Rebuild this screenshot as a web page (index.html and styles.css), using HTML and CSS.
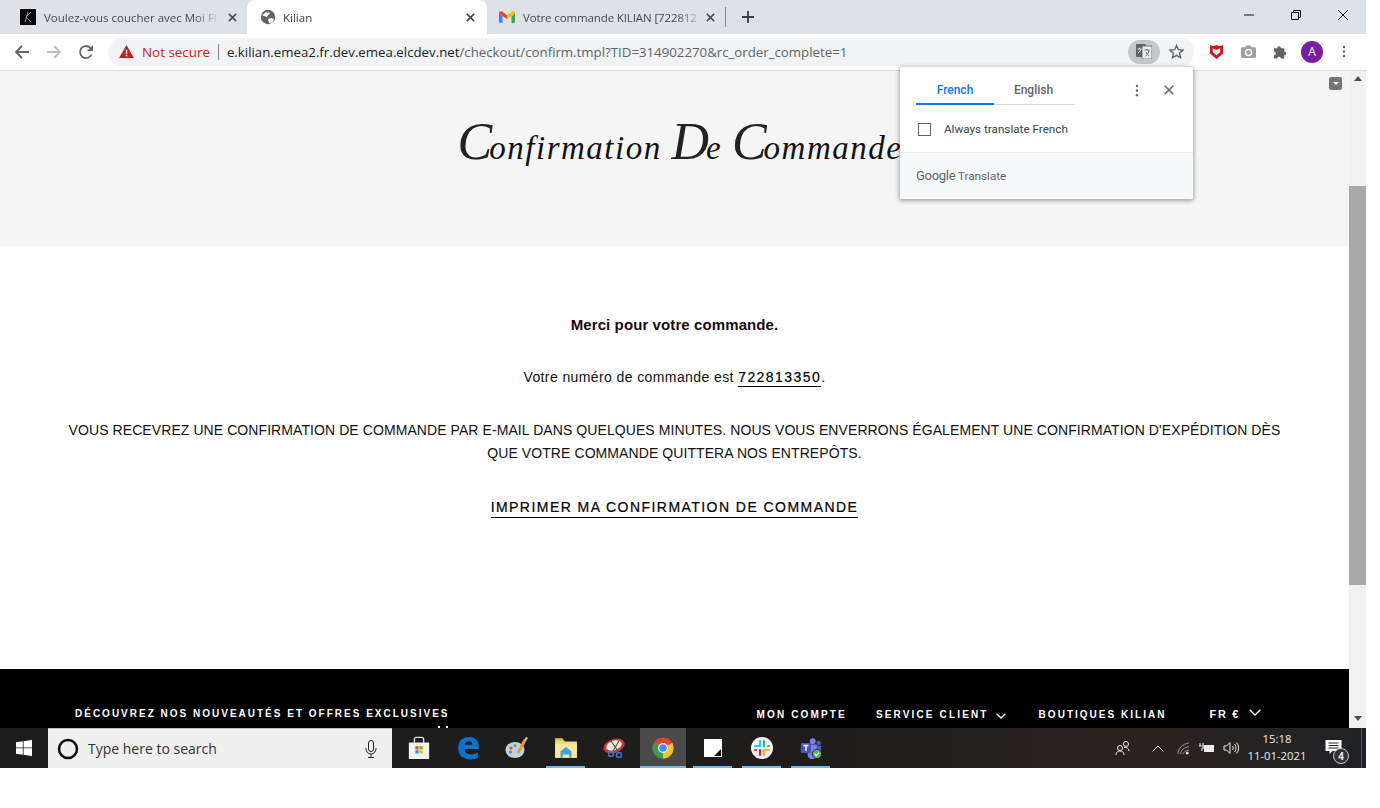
FILE: index.html
```html
<!DOCTYPE html>
<html lang="fr">
<head>
<meta charset="utf-8">
<title>Kilian</title>
<link rel="stylesheet" href="styles.css">
</head>
<body>
<div class="screen">
  <header class="tabstrip">
    <div class="tab tab-a">
      <svg class="fav" viewBox="0 0 16 16"><rect width="16" height="16" fill="#0a0a0a"/><path d="M5 13 8 3M11 3 6 8l5 5" stroke="#bbb" stroke-width=".8" fill="none"/></svg>
      <span class="tab-title">Voulez-vous coucher avec Moi Fl</span>
      <svg class="tab-x" viewBox="0 0 10 10"><path d="M1 1l8 8M9 1 1 9" stroke="#45484c" stroke-width="1.7"/></svg>
    </div>
    <div class="tab tab-active">
      <svg class="fav" viewBox="0 0 16 16"><circle cx="8" cy="8" r="7.2" fill="#5f6368"/><path d="M2 6c2-1 3-2 4-3 1 1 2 1 3 0l1 2-2 1-1 2-3-1zM8 10l3-1 3 1-2 4-3 0z" fill="#fff"/></svg>
      <span class="tab-title">Kilian</span>
      <svg class="tab-x" viewBox="0 0 10 10"><path d="M1 1l8 8M9 1 1 9" stroke="#45484c" stroke-width="1.7"/></svg>
    </div>
    <div class="tab tab-c">
      <svg class="fav" viewBox="0 0 16 12"><path d="M0 2v9a1 1 0 0 0 1 1h2.500V5.500z" fill="#4285f4"/><path d="M16 2v9a1 1 0 0 1-1 1h-2.500V5.500z" fill="#34a853"/><path d="M0 2C0 .5 1.500-.4 3 .6l5 3.700V8L0 2.500z" fill="#ea4335"/><path d="M16 2c0-1.500-1.500-2.400-3-1.400L8 4.300V8l8-5.500z" fill="#fbbc04"/></svg>
      <span class="tab-title">Votre commande KILIAN [722812</span>
      <svg class="tab-x" viewBox="0 0 10 10"><path d="M1 1l8 8M9 1 1 9" stroke="#45484c" stroke-width="1.7"/></svg>
    </div>
    <span class="tab-sep"></span>
    <svg class="new-tab" viewBox="0 0 12 12"><path d="M6 0v12M0 6h12" stroke="#3c4043" stroke-width="1.800"/></svg>
    <div class="win-controls">
      <svg class="win-btn" viewBox="0 0 12 12"><path d="M1 6h10" stroke="#111" stroke-width="1"/></svg>
      <svg class="win-btn" viewBox="0 0 12 12"><path d="M1.500 3.500h7v7h-7zM3.500 3.500v-2h7v7h-2" fill="none" stroke="#111" stroke-width="1"/></svg>
      <svg class="win-btn" viewBox="0 0 12 12"><path d="M1 1l10 10M11 1 1 11" stroke="#111" stroke-width="1"/></svg>
    </div>
  </header>

  <nav class="toolbar">
    <svg class="nav-ic" viewBox="0 0 16 16"><path d="M15 8H2M8 2 2 8l6 6" fill="none" stroke="#5f6368" stroke-width="1.800"/></svg>
    <svg class="nav-ic" viewBox="0 0 16 16"><path d="M1 8h13M8 2l6 6-6 6" fill="none" stroke="#bdc1c6" stroke-width="1.800"/></svg>
    <svg class="nav-ic" viewBox="0 0 16 16"><path d="M13.500 10.500A6 6 0 1 1 12.300 3.800" fill="none" stroke="#5f6368" stroke-width="1.800"/><path d="M15 1v6H9z" fill="#5f6368"/></svg>
    <div class="omnibox">
      <svg class="warn" viewBox="0 0 16 14"><path d="M8 0l8 14H0z" fill="#c5221f"/><path d="M7.200 5h1.600v4.500H7.200zM7.200 10.500h1.600V12H7.200z" fill="#fff"/></svg>
      <span class="not-secure">Not secure</span>
      <span class="omni-sep"></span>
      <span class="url"><b>e.kilian.emea2.fr.dev.emea.elcdev.net</b>/checkout/confirm.tmpl?TID=314902270&amp;rc_order_complete=1</span>
      <span class="translate-pill">
        <svg viewBox="0 0 16 15" class="translate-ic"><rect x="0" y="0" width="10" height="13" rx="1" fill="#5f6368"/><rect x="6" y="2" width="10" height="13" rx="1" fill="#e8eaed" stroke="#5f6368" stroke-width=".8"/><path d="M1.500 5h4M3.500 3.500V5M2 9c1.500-1 2.500-2.500 3-4" stroke="#e8eaed" fill="none"/><path d="M8.500 6h5M11 5v1M9.500 12c2-1 3-3 3.500-6M10 8c.6 1.800 2 3.300 3.500 4" stroke="#5f6368" fill="none" stroke-width=".9"/></svg>
      </span>
      <svg class="star" viewBox="0 0 16 16"><path d="M8 1.500l2 4.600 5 .4-3.800 3.300 1.200 4.900L8 12.100l-4.400 2.600 1.200-4.900L1 6.500l5-.4z" fill="none" stroke="#5f6368" stroke-width="1.400"/></svg>
    </div>
    <div class="ext-row">
      <svg class="ext" viewBox="0 0 14 16"><path d="M0 1l3.500 1.500L7 1l3.500 1.500L14 1v9l-7 6-7-6z" fill="#c8171d"/><path d="M3 4.500l4 1.800 4-1.800v4.300L7 12 3 8.800z" fill="#fff"/></svg>
      <svg class="ext" viewBox="0 0 16 14"><path d="M1.500 2.500h3L6 .5h4l1.500 2h3A1.500 1.500 0 0 1 16 4v8.500a1.500 1.500 0 0 1-1.500 1.500h-13A1.500 1.500 0 0 1 0 12.500V4a1.500 1.500 0 0 1 1.500-1.500z" fill="#9aa0a6"/><circle cx="8" cy="8" r="3.200" fill="none" stroke="#fff" stroke-width="1.500"/></svg>
      <svg class="ext" viewBox="0 0 16 16"><path d="M1 4.500h3.500a2 2 0 1 1 4 0H12v3.500a2 2 0 1 1 0 4V15.500H8.500a2 2 0 1 0-4 0H1v-3.500a2 2 0 1 0 0-4z" fill="#5f6368"/></svg>
      <span class="avatar">A</span>
      <svg class="ext kebab" viewBox="0 0 4 16"><circle cx="2" cy="2.500" r="1.500" fill="#5f6368"/><circle cx="2" cy="8" r="1.500" fill="#5f6368"/><circle cx="2" cy="13.500" r="1.500" fill="#5f6368"/></svg>
    </div>
  </nav>

  <div class="viewport">
    <main class="page">
      <section class="hero">
        <h1 class="hero-title"><span class="cap">C</span>onfirmation <span class="cap">D</span>e <span class="cap">C</span>ommande</h1>
      </section>
      <section class="confirm">
        <p class="thanks">Merci pour votre commande.</p>
        <p class="order">Votre numéro de commande est <a class="order-no">722813350</a>.</p>
        <p class="notice">VOUS RECEVREZ UNE CONFIRMATION DE COMMANDE PAR E-MAIL DANS QUELQUES MINUTES. NOUS VOUS ENVERRONS ÉGALEMENT UNE CONFIRMATION D'EXPÉDITION DÈS QUE VOTRE COMMANDE QUITTERA NOS ENTREPÔTS.</p>
        <a class="print">IMPRIMER MA CONFIRMATION DE COMMANDE</a>
      </section>
      <footer class="site-footer">
        <span class="news">DÉCOUVREZ NOS NOUVEAUTÉS ET OFFRES EXCLUSIVES</span>
        <div class="foot-links">
          <span class="foot-link l1">MON COMPTE</span>
          <span class="foot-link l2">SERVICE CLIENT <svg class="chev" viewBox="0 0 10 6"><path d="M.7.7 5 5 9.300.7" fill="none" stroke="#fff" stroke-width="1.300"/></svg></span>
          <span class="foot-link l3">BOUTIQUES KILIAN</span>
          <span class="foot-lang">FR € <svg class="chev big" viewBox="0 0 12 7"><path d="M.7.7 6 6 11.300.7" fill="none" stroke="#fff" stroke-width="1.300"/></svg></span>
        </div>
      </footer>
    </main>
    <aside class="scrollbar">
      <span class="arrow-up"></span>
      <span class="thumb"></span>
      <span class="arrow-down"></span>
    </aside>
  </div>

  <div class="translate-pop">
    <div class="pop-main">
      <div class="pop-head">
        <div class="pop-tabs">
          <span class="pop-tab on">French</span>
          <span class="pop-tab">English</span>
        </div>
        <svg class="pop-kebab" viewBox="0 0 4 14"><circle cx="2" cy="2" r="1.300" fill="#5f6368"/><circle cx="2" cy="7" r="1.300" fill="#5f6368"/><circle cx="2" cy="12" r="1.300" fill="#5f6368"/></svg>
        <svg class="pop-x" viewBox="0 0 10 10"><path d="M.7.7l8.600 8.600M9.300.7.7 9.300" stroke="#5f6368" stroke-width="1.500"/></svg>
      </div>
      <label class="pop-check"><span class="box"></span>Always translate French</label>
    </div>
    <div class="pop-foot"><span class="g-logo">Google</span> Translate</div>
  </div>

  <footer class="taskbar">
    <span class="start"><svg viewBox="0 0 16 16"><path d="M0 2.300 6.800 1.300v6.200H0zM7.600 1.200 16 0v7.500H7.600zM0 8.300h6.800v6.400L0 13.700zM7.600 8.300H16V16l-8.400-1.200z" fill="#fff"/></svg></span>
    <div class="search">
      <svg class="cortana" viewBox="0 0 22 22"><circle cx="11" cy="11" r="9" fill="none" stroke="#111" stroke-width="2.600"/></svg>
      <span class="search-text">Type here to search</span>
      <svg class="mic" viewBox="0 0 12 18"><rect x="3.500" y=".5" width="5" height="11" rx="2.500" fill="none" stroke="#222"/><path d="M1 8v1a5 5 0 0 0 10 0V8M6 14v3M3 17.500h6" fill="none" stroke="#222"/></svg>
    </div>
    <div class="apps">
      <span class="app"><svg viewBox="0 0 24 26"><path d="M7 7V3.500A2 2 0 0 1 9 1.500h6a2 2 0 0 1 2 2V7" fill="none" stroke="#ddd" stroke-width="1.500"/><path d="M1 7h22v17a1 1 0 0 1-1 1H2a1 1 0 0 1-1-1z" fill="#f3f3f3"/><path d="M8 11h3.600v3.600H8z" fill="#f25022"/><path d="M12.400 11H16v3.600h-3.600z" fill="#7fba00"/><path d="M8 15.400h3.600V19H8z" fill="#00a4ef"/><path d="M12.400 15.400H16V19h-3.600z" fill="#ffb900"/></svg></span>
      <span class="app"><svg viewBox="0 0 22 22"><path d="M2 11C2 5 6 1 12 1c5 0 9 3 9 9v2H8c0 3 2 5 6 5 3 0 5-1 6-2v5c-2 1-4 1.500-7 1.500C6 21.500 2 17 2 11zm6-3h7c0-2-1.500-3.200-3.300-3.200S8.500 6 8 8z" fill="#0a72d0"/></svg></span>
      <span class="app"><svg viewBox="0 0 24 24"><ellipse cx="10" cy="14" rx="9.500" ry="8" fill="#c2d3de"/><circle cx="6" cy="12" r="1.600" fill="#d94c3a"/><circle cx="10" cy="9.500" r="1.600" fill="#5cae4c"/><circle cx="5.500" cy="16" r="1.600" fill="#3f88c9"/><path d="M13 17 20 4" stroke="#e29b3a" stroke-width="3"/><path d="M19 4l2-3 2 1-2 3z" fill="#d5c3a3"/></svg></span>
      <span class="app"><svg viewBox="0 0 22 20"><path d="M1 2h7l2 2h11v15H1z" fill="#f0d77b"/><path d="M1 1h7v2H1z" fill="#e6b93d"/><path d="M1 6h20v13H1z" fill="#fbe59b"/><path d="M6 13l5-4 5 4v6h-2v-3H8v3H6z" fill="#3aa6dd"/></svg></span>
      <span class="app"><svg viewBox="0 0 24 24"><ellipse cx="11" cy="10" rx="11" ry="7" transform="rotate(-20 11 10)" fill="#c03b3b"/><ellipse cx="11" cy="9.500" rx="8" ry="4.800" transform="rotate(-20 11 9.500)" fill="#ecebe6"/><path d="M8 5l7 10M16 5l-6 10" stroke="#555" stroke-width="1.200"/><circle cx="8" cy="18" r="2.500" fill="none" stroke="#2f7fd0" stroke-width="1.500"/><circle cx="16" cy="19" r="2.500" fill="none" stroke="#2f7fd0" stroke-width="1.500"/></svg></span>
      <span class="app app-chrome"><svg viewBox="0 0 24 24"><circle cx="12" cy="12" r="11.500" fill="#db4437"/><path d="M12 12 22 6.300A11.500 11.500 0 0 1 12 23.500z" fill="#fbc02d"/><path d="M12 12 12 23.500A11.500 11.500 0 0 1 2 6.300z" fill="#3c9a4e"/><circle cx="12" cy="12" r="5.400" fill="#fff"/><circle cx="12" cy="12" r="4.200" fill="#4c8bf5"/></svg></span>
      <span class="app app-run app-sticky"><svg viewBox="0 0 18 18"><path d="M0 0h18v18H0z" fill="#fff"/><path d="M17 10v7h-7z" fill="#111"/></svg></span>
      <span class="app app-run"><svg viewBox="0 0 22 22"><circle cx="11" cy="11" r="11" fill="#f4f4f4"/><path d="M9 4v5M4 9h5" stroke="#36c5f0" stroke-width="2.200" stroke-linecap="round"/><path d="M13 4v5M18 9h-1" stroke="#2eb67d" stroke-width="2.200" stroke-linecap="round"/><path d="M9 18v-5M4 13h1" stroke="#e01e5a" stroke-width="2.200" stroke-linecap="round"/><path d="M13 18v-5M18 13h-5" stroke="#ecb22e" stroke-width="2.200" stroke-linecap="round"/></svg></span>
      <span class="app app-run"><svg viewBox="0 0 26 26"><circle cx="15" cy="5" r="3.500" fill="#7b83eb"/><circle cx="22" cy="7" r="2.500" fill="#5059c9"/><path d="M9 9h11v12a5 5 0 0 1-11 0z" fill="#7b83eb"/><path d="M20 10h5v7a4 4 0 0 1-5 3z" fill="#5059c9"/><rect x="1" y="7" width="12" height="12" rx="1" fill="#4b53bc"/><path d="M4 10h6M7 10v6.500" stroke="#fff" stroke-width="1.700"/><circle cx="20" cy="20" r="5.500" fill="#5cb85c" stroke="#1c1c1c"/><path d="M17.500 20l2 2 3-3.500" stroke="#fff" fill="none" stroke-width="1.300"/></svg></span>
    </div>
    <div class="tray">
      <svg class="tray-ic people" viewBox="0 0 16 16"><circle cx="5" cy="8" r="2.500" fill="none" stroke="#eee"/><path d="M1 15c0-3 2-4 4-4s4 1 4 4" fill="none" stroke="#eee"/><circle cx="11" cy="4" r="2.500" fill="none" stroke="#eee"/><path d="M9 7.500c2-.5 5 .5 5 3.500" fill="none" stroke="#eee"/></svg>
      <svg class="tray-ic caret" viewBox="0 0 12 7"><path d="M.5 6.500 6 1l5.500 5.500" fill="none" stroke="#eee"/></svg>
      <svg class="tray-ic wifi" viewBox="0 0 14 14"><path d="M1 13C1 7 6 2 13 1M4 13c0-4 3-7 9-8M7 13c0-2 2-4 6-4" fill="none" stroke="#aaa"/><circle cx="11" cy="12" r="1.500" fill="#eee"/></svg>
      <svg class="tray-ic batt" viewBox="0 0 16 12"><path d="M1 1v3M4 1v3M0 4h5v2H3v3" fill="none" stroke="#eee"/><rect x="5" y="3" width="10" height="7" fill="#eee"/></svg>
      <svg class="tray-ic vol" viewBox="0 0 16 14"><path d="M1 5h2.500L7 1.500v11L3.500 9H1z" fill="none" stroke="#eee"/><path d="M9.500 5a3 3 0 0 1 0 4M11.500 3a6 6 0 0 1 0 8M13.500 1.500a8 8 0 0 1 0 11" fill="none" stroke="#eee"/></svg>
      <div class="clock"><span>15:18</span><span>11-01-2021</span></div>
      <span class="notif"><svg viewBox="0 0 16 15"><path d="M0 0h16v11H7l-3 3v-3H0z" fill="#fff"/><path d="M3 3h10M3 5.500h10M3 8h10" stroke="#222"/></svg><b>4</b></span>
      <span class="show-desktop"></span>
    </div>
  </footer>
</div>
</body>
</html>
```
FILE: styles.css
```css
* { box-sizing: border-box; }
html, body { margin: 0; height: 808px; background: #fff; overflow: hidden; }
body { font-family: "Liberation Sans", Arial, sans-serif; }
p, h1 { margin: 0; }

.screen { position: relative; width: 1366px; height: 768px; display: flex; flex-direction: column; overflow: hidden; }

/* tab strip */
.tabstrip { height: 34px; flex: none; background: #dee1e6; display: flex; align-items: stretch; padding-left: 8px; font: 11.500px "Open Sans", "Noto Sans", sans-serif; color: #45484c; }
.tab { display: flex; align-items: center; padding: 0 10px 0 12px; position: relative; }
.tab-a { width: 239px; }
.tab-active { width: 240px; background: #fff; border-radius: 8px 8px 0 0; color: #3c4043; padding-left: 13px; padding-right: 12px; }
.tab-c { width: 238px; padding-left: 12px; padding-right: 10px; }
.tab-c .tab-title { letter-spacing: -.12px; }
.tab-c .tab-x { margin-left: 2px; }
.fav { width: 16px; height: 16px; flex: none; margin-right: 8px; }
.tab-c .fav { height: 12px; }
.tab-active .fav { margin-right: 7px; }
.tab-title { flex: 1; white-space: nowrap; overflow: hidden; min-width: 0; -webkit-mask-image: linear-gradient(90deg, #000 85%, transparent); mask-image: linear-gradient(90deg, #000 85%, transparent); }
.tab-x { width: 9px; height: 9px; flex: none; margin-left: 8px; }
.tab-sep { width: 1px; height: 20px; background: #80868b; align-self: center; flex: none; }
.new-tab { width: 12px; height: 12px; align-self: center; margin-left: 16px; flex: none; }
.win-controls { margin-left: auto; display: flex; align-items: center; margin-top: -4px; }
.win-btn { width: 12px; height: 12px; margin-left: 35px; }
.win-btn:last-child { margin-right: 17px; }

/* toolbar */
.toolbar { height: 37px; flex: none; background: #fff; border-bottom: 1px solid #dadce0; display: flex; align-items: center; padding: 0 0 1px 14px; }
.nav-ic { width: 16px; height: 16px; margin-right: 16px; flex: none; }
.omnibox { width: 1086px; height: 28px; margin-left: -2px; background: #f1f3f4; border-radius: 14px; display: flex; align-items: center; padding: 0 10px 0 11px; font: 14px "Open Sans", "Noto Sans", sans-serif; white-space: nowrap; }
.warn { width: 15px; height: 13px; flex: none; margin-right: 8px; }
.not-secure { color: #c5221f; font-size: 13.400px; }
.omni-sep { width: 1px; height: 16px; background: #80868b; margin: 0 8px; flex: none; }
.url { color: #5f6368; flex: 1; font-size: 13.250px; }
.url b { font-weight: 400; color: #202124; }
.translate-pill { width: 32px; height: 24px; border-radius: 12px; background: #c4c6c8; display: flex; align-items: center; justify-content: center; flex: none; margin-right: 9px; }
.translate-ic { width: 16px; height: 15px; }
.star { width: 15px; height: 15px; flex: none; }
.ext-row { display: flex; align-items: center; padding-left: 15px; }
.ext { width: 15px; height: 15px; margin-right: 17px; flex: none; }
.avatar { width: 22px; height: 22px; border-radius: 50%; background: #7b1fa2; color: #fff; font: 12px "Open Sans", sans-serif; display: flex; align-items: center; justify-content: center; margin-left: -4px; flex: none; }
.kebab { width: 4px; height: 13px; margin-left: 19px; margin-right: 0; }

/* viewport */
.viewport { height: 657px; flex: none; display: flex; }
.page { position: relative; width: 1349px; flex: none; display: flex; flex-direction: column; overflow: hidden; background: #fff; }
.page::after { content: ""; position: absolute; left: 1329px; top: 6px; width: 13px; height: 13px; border-radius: 2px; background: #757575; }
.page::before { content: ""; position: absolute; left: 1333px; top: 11px; width: 0; height: 0; border: 3px solid transparent; border-bottom: 0; border-top: 3px solid #fff; z-index: 1; }
.hero { height: 175px; flex: none; background: #f5f5f5; display: flex; align-items: center; justify-content: center; padding-left: 11px; padding-bottom: 22px; }
.hero-title { font: italic 400 33px "Liberation Serif", serif; color: #111; letter-spacing: 1.5px; white-space: nowrap; line-height: 52px; }
.cap { font-size: 52px; line-height: 40px; letter-spacing: -3px; color: #222; }
.confirm { flex: 1; display: flex; flex-direction: column; align-items: center; text-align: center; color: #111; font-size: 14px; padding-top: 70px; }
.thanks { font-weight: 700; font-size: 15px; letter-spacing: .1px; line-height: 18px; color: #1a0a10; }
.order { margin-top: 34px; line-height: 18px; letter-spacing: .4px; }
.order-no { letter-spacing: 1.450px; border-bottom: 1px solid #000; display: inline-block; line-height: 17px; color: #000; -webkit-text-stroke: .2px #000; }
.notice { width: 1220px; margin-top: 32px; line-height: 23px; letter-spacing: .08px; }
.print { margin-top: 33px; letter-spacing: 1.450px; line-height: 19px; border-bottom: 1px solid #000; color: #000; -webkit-text-stroke: .2px #000; }
.site-footer { height: 59px; flex: none; background: #000; color: #fff; font-size: 10px; font-weight: 700; letter-spacing: 2px; display: flex; align-items: flex-start; padding: 39px 0 0 75px; white-space: nowrap; position: relative; }
.site-footer::after { content: ""; position: absolute; left: 438px; top: 57px; width: 2px; height: 2px; background: #fff; box-shadow: 8px 0 #fff; }
.news { line-height: 12px; }
.foot-links { display: flex; align-items: center; margin-left: 307px; line-height: 12px; padding-top: 1px; letter-spacing: 2.150px; }
.foot-link { display: inline-flex; align-items: center; gap: 5px; }
.l2 { margin-left: 29px; }
.l3 { margin-left: 33px; letter-spacing: 2.020px; }
.foot-lang { margin-left: 43px; font-size: 11px; letter-spacing: 1.700px; margin-top: -2px; display: inline-flex; align-items: center; gap: 4px; }
.chev { width: 10px; height: 6px; margin-left: 2px; margin-top: 1px; }
.chev.big { width: 12px; height: 7px; margin-left: 5px; margin-top: -3px; }
.scrollbar { width: 17px; background: #f1f1f1; display: flex; flex-direction: column; align-items: center; position: relative; }
.arrow-up { width: 0; height: 0; border: 4px solid transparent; border-top: 0; border-bottom: 5px solid #505050; margin-top: 5px; }
.thumb { width: 100%; height: 399px; background: #a8a8a8; margin-top: 105px; }
.arrow-down { width: 0; height: 0; border: 4px solid transparent; border-bottom: 0; border-top: 5px solid #505050; margin-top: 131px; }

/* translate popup */
.translate-pop { position: absolute; left: 900px; top: 67px; width: 293px; height: 132px; background: #fff; border-radius: 2px; box-shadow: 0 1px 4px 1px rgba(60, 64, 67, .45); display: flex; flex-direction: column; font: 11.700px Roboto, "Noto Sans", sans-serif; color: #3c4043; }
.pop-main { height: 86px; flex: none; padding: 9px 0 0 16px; border-bottom: 1px solid #e6e8ea; }
.pop-head { display: flex; align-items: center; height: 29px; }
.pop-tabs { display: flex; width: 159px; height: 29px; border-bottom: 1px solid #dadce0; flex: none; }
.pop-tab { width: 78px; height: 29px; text-align: center; line-height: 28px; font-size: 12px; font-weight: 500; color: #5f6368; padding-left: 1px; }
.pop-tab.on { color: #1a73e8; border-bottom: 2px solid #1a73e8; padding-left: 0; }
.pop-kebab { width: 4px; height: 13px; margin-left: 60px; flex: none; }
.pop-x { width: 10px; height: 10px; margin-left: 25px; margin-top: -1px; flex: none; }
.pop-check { display: flex; align-items: center; margin-top: 16px; padding-left: 2px; line-height: 16px; }
.box { width: 13px; height: 13px; border: 1.500px solid #5f6368; margin-right: 13px; flex: none; }
.pop-foot { flex: 1; background: #f8f9fa; padding: 15px 0 0 16px; color: #5f6368; line-height: 16px; border-radius: 0 0 2px 2px; }
.g-logo { font-size: 13px; letter-spacing: -.3px; }

/* taskbar */
.taskbar { height: 40px; flex: none; background: linear-gradient(90deg, #1d1d1d 0%, #1e1d1c 60%, #2a2320 85%, #1f2225 100%); display: flex; align-items: stretch; color: #fff; font-family: "Open Sans", "Noto Sans", sans-serif; }
.start { width: 48px; display: flex; align-items: center; justify-content: center; flex: none; }
.start svg { width: 16px; height: 16px; }
.search { width: 344px; flex: none; background: #f0f0f0; border-top: 1px solid #bbb; display: flex; align-items: center; padding: 0 15px 0 9px; color: #333; }
.cortana { width: 22px; height: 22px; flex: none; }
.search-text { margin-left: 9px; flex: 1; font-size: 14px; }
.mic { width: 12px; height: 18px; flex: none; }
.apps { display: flex; padding-left: 2px; flex: none; }
.app { width: 49px; display: flex; align-items: center; justify-content: center; position: relative; flex: none; }
.app svg { width: 24px; height: 24px; }
.app:nth-child(4)::after, .app-run::after, .app-chrome::after { content: ""; position: absolute; left: 5px; right: 5px; bottom: 0; height: 2px; background: #76b9ed; }
.app-chrome { background: #4a4a4a; width: 46px; margin-left: 1px; margin-right: 2px; }
.app-chrome svg { width: 22px; height: 22px; }
.app-chrome::after { left: 0; right: 0; }
.app-run svg { width: 22px; height: 22px; }
.app-sticky svg { width: 18px; height: 18px; }
.tray { margin-left: auto; display: flex; align-items: center; }
.tray-ic { flex: none; }
.people { width: 16px; height: 16px; margin-right: 21px; }
.caret { width: 12px; height: 7px; margin-right: 13px; }
.wifi { width: 13px; height: 13px; margin-right: 9px; }
.batt { width: 16px; height: 12px; margin-right: 8px; }
.vol { width: 16px; height: 14px; }
.clock { width: 74px; margin-left: 1px; margin-top: -2px; display: flex; flex-direction: column; align-items: center; font-size: 11.300px; line-height: 17px; color: #eee; }
.notif { width: 20px; position: relative; margin-left: 11px; height: 24px; }
.notif svg { width: 17px; height: 15px; position: absolute; left: 0; top: 4px; }
.notif b { position: absolute; left: 8px; top: 12px; width: 16px; height: 16px; border-radius: 50%; background: #333; border: 1px solid #ccc; font-size: 10px; line-height: 14px; text-align: center; color: #eee; }
.show-desktop { width: 1px; height: 100%; background: #555; margin-left: 16px; margin-right: 4px; align-self: stretch; }
```
